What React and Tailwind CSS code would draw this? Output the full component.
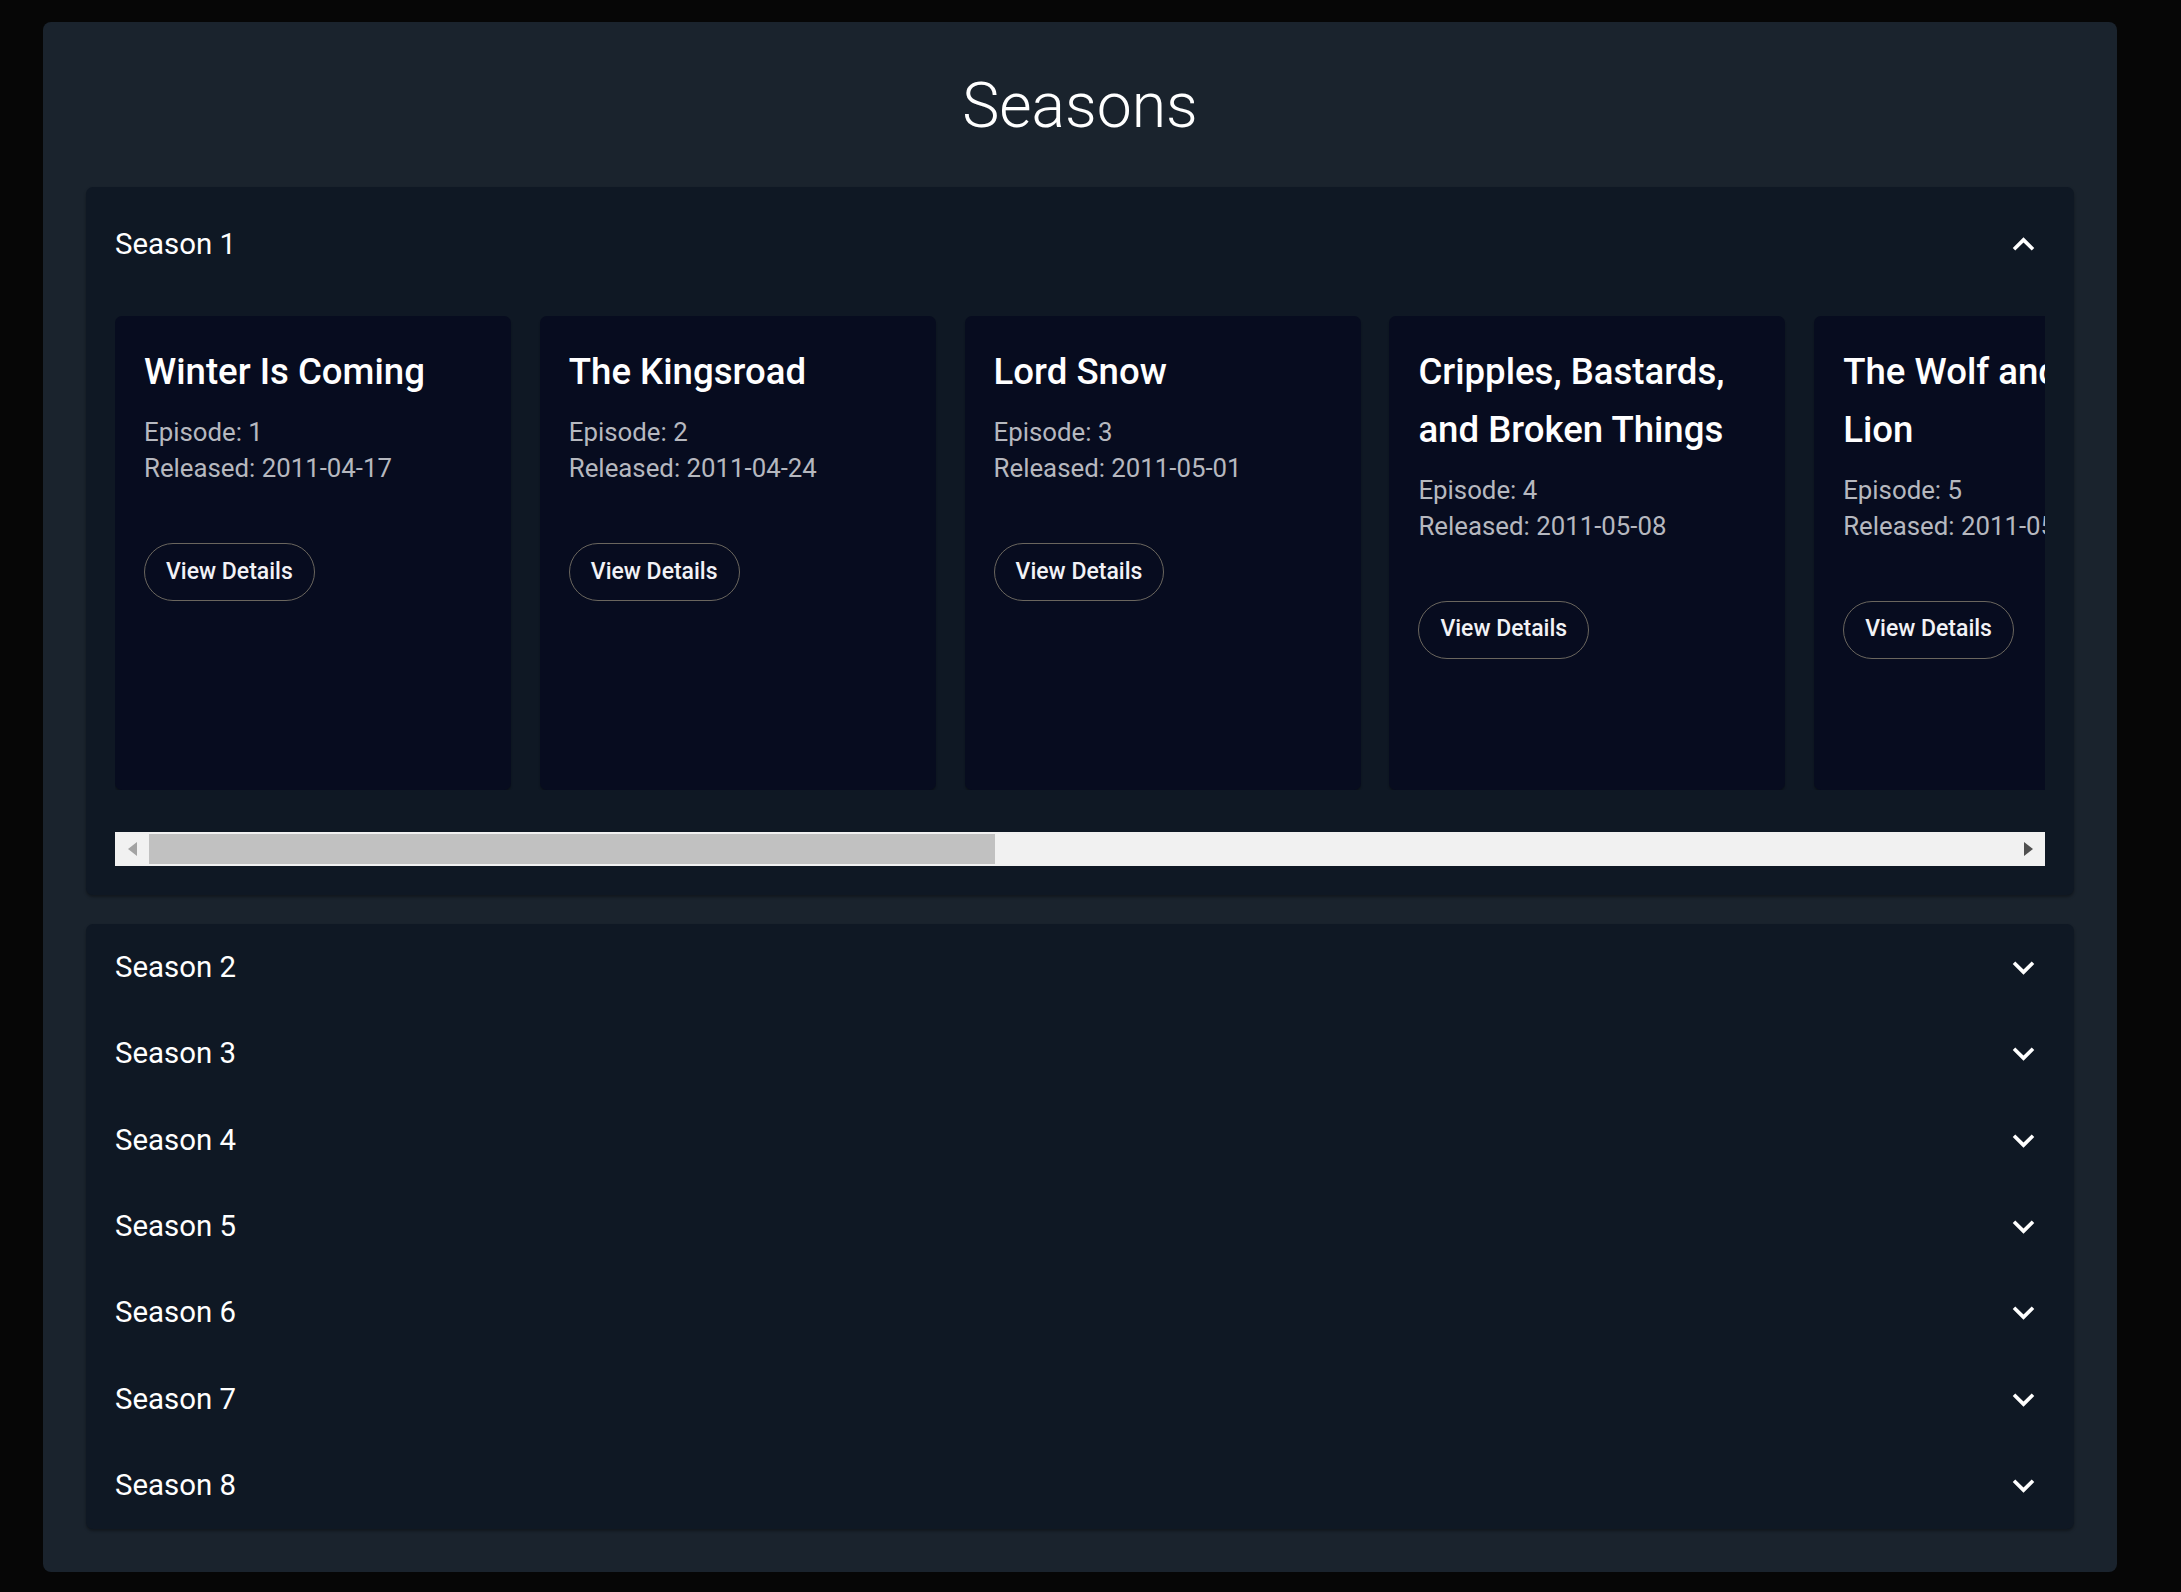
import React from 'react';

const episodes = [
  { no: 1, title: 'Winter Is Coming', date: '2011-04-17' },
  { no: 2, title: 'The Kingsroad', date: '2011-04-24' },
  { no: 3, title: 'Lord Snow', date: '2011-05-01' },
  { no: 4, title: 'Cripples, Bastards, and Broken Things', date: '2011-05-08' },
  { no: 5, title: 'The Wolf and the Lion', date: '2011-05-15' },
  { no: 6, title: 'A Golden Crown', date: '2011-05-22' },
  { no: 7, title: 'You Win or You Die', date: '2011-05-29' },
  { no: 8, title: 'The Pointy End', date: '2011-06-05' },
  { no: 9, title: 'Baelor', date: '2011-06-12' },
  { no: 10, title: 'Fire and Blood', date: '2011-06-19' },
];

function Chevron({ up }) {
  return (
    <svg viewBox="0 0 24 24" className="h-[43px] w-[43px] fill-white">
      {up ? (
        <path d="M12 8l-6 6 1.41 1.41L12 10.83l4.59 4.58L18 14z" />
      ) : (
        <path d="M16.59 8.59 12 13.17 7.41 8.59 6 10l6 6 6-6z" />
      )}
    </svg>
  );
}

function EpisodeCard({ ep }) {
  return (
    <div className="h-[474px] w-[396px] shrink-0 rounded-[7px] bg-[#070c1f] px-[29px] pt-[27px] pb-[29px] shadow-[0_2px_2px_rgba(0,0,0,0.3)]">
      <h3 className="mb-[13px] text-[36.6px] font-medium leading-[57.6px] text-white">{ep.title}</h3>
      <p className="text-[25.8px] leading-[36px] text-[#b6b8bf]">Episode: {ep.no}</p>
      <p className="text-[25.8px] leading-[36px] text-[#b6b8bf]">Released: {ep.date}</p>
      <button className="mt-[57px] h-[58px] rounded-full border-[1.8px] border-[#6a665e] px-[21px] text-[23px] font-medium text-[#f2f2f6]">
        View Details
      </button>
    </div>
  );
}

function FakeScrollbar() {
  return (
    <div className="flex h-[34px] items-center bg-[#f1f1f1]">
      <div className="flex h-full w-[34px] shrink-0 items-center justify-center">
        <div className="h-0 w-0 border-y-[7px] border-r-[9px] border-y-transparent border-r-[#a3a3a3]" />
      </div>
      <div className="h-[30px] w-[846px] shrink-0 bg-[#c1c1c1]" />
      <div className="flex-1" />
      <div className="flex h-full w-[34px] shrink-0 items-center justify-center">
        <div className="h-0 w-0 border-y-[7px] border-l-[9px] border-y-transparent border-l-[#505050]" />
      </div>
    </div>
  );
}

export default function App() {
  const others = [2, 3, 4, 5, 6, 7, 8];
  return (
    <div className="min-h-screen bg-[#060606] pl-[43px] pt-[22px] pb-[20px] font-['Roboto',sans-serif]">
      <div className="w-[2074px] rounded-[8px] bg-[#1a232d] px-[43px] pt-[46px] pb-[43px]">
        <h1 className="mb-[43px] text-center text-[62.5px] font-light leading-[76px] text-white">Seasons</h1>

        <div className="rounded-[7px] bg-[#0f1824] shadow-[0_2px_3px_rgba(0,0,0,0.35)]">
          <div className="flex h-[115px] items-center justify-between px-[29px]">
            <span className="text-[29.4px] leading-[43px] text-white">Season 1</span>
            <Chevron up />
          </div>
          <div className="px-[29px] pb-[29px] pt-[14.4px]">
            <div className="flex gap-[28.8px] overflow-hidden">
              {episodes.map((ep) => (
                <EpisodeCard key={ep.no} ep={ep} />
              ))}
            </div>
            <div className="mt-[42px]">
              <FakeScrollbar />
            </div>
          </div>
        </div>

        <div className="mt-[28.8px] rounded-[7px] bg-[#0f1824] shadow-[0_2px_3px_rgba(0,0,0,0.35)]">
          {others.map((n) => (
            <div key={n} className="flex h-[86.4px] items-center justify-between px-[29px]">
              <span className="text-[29.4px] leading-[43px] text-white">Season {n}</span>
              <Chevron />
            </div>
          ))}
        </div>
      </div>
    </div>
  );
}
